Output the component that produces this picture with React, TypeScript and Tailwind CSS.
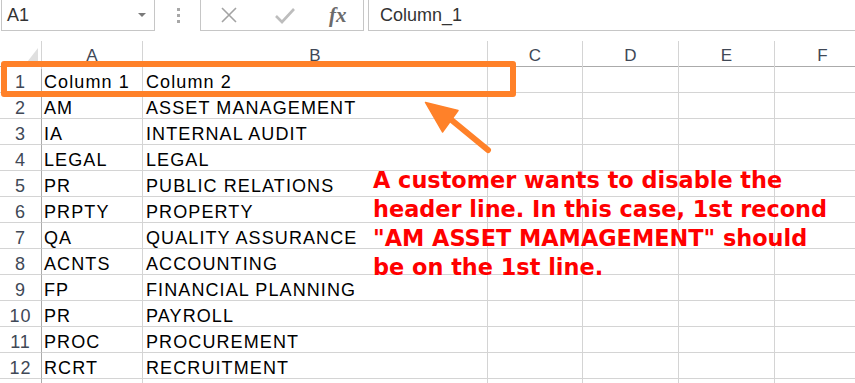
import type { ReactNode } from "react";

const rows: [string, string][] = [
  ["Column 1", "Column 2"],
  ["AM", "ASSET MANAGEMENT"],
  ["IA", "INTERNAL AUDIT"],
  ["LEGAL", "LEGAL"],
  ["PR", "PUBLIC RELATIONS"],
  ["PRPTY", "PROPERTY"],
  ["QA", "QUALITY ASSURANCE"],
  ["ACNTS", "ACCOUNTING"],
  ["FP", "FINANCIAL PLANNING"],
  ["PR", "PAYROLL"],
  ["PROC", "PROCUREMENT"],
  ["RCRT", "RECRUITMENT"],
  ["", ""],
];

const cols = "grid grid-cols-[42px_101px_345px_95px_96px_96px_96px]";

function Cell({ children, className = "" }: { children?: ReactNode; className?: string }) {
  return (
    <div className={`flex h-[26px] items-end border-r border-b border-[#d4d4d4] pl-[2px] text-[18px] leading-[20px] tracking-[1.1px] text-black whitespace-nowrap overflow-visible ${className}`}>
      {children}
    </div>
  );
}

export default function App() {
  return (
    <div className="relative h-[383px] w-[855px] overflow-hidden bg-white font-['Liberation_Sans',Arial,sans-serif]">
      {/* formula bar */}
      <div className="flex h-[31px] text-[#333]">
        <div className="ml-px flex w-[154px] items-center justify-between border-x border-b border-[#c6c6c6] pl-[5px] pr-[8px] text-[18px]">
          <span>A1</span>
          <span className="h-0 w-0 border-x-[4px] border-t-[4px] border-x-transparent border-t-[#7a7a7a]" />
        </div>
        <div className="flex w-[45px] flex-col items-center justify-center gap-[3px] pl-[2px]">
          <span className="h-[3px] w-[3px] bg-[#a8a8a8]" />
          <span className="h-[3px] w-[3px] bg-[#a8a8a8]" />
          <span className="h-[3px] w-[3px] bg-[#a8a8a8]" />
        </div>
        <div className="flex w-[164px] items-center border-x border-b border-[#c6c6c6]">
          <svg width="18" height="18" viewBox="0 0 18 18" className="ml-[19px]">
            <path d="M2 2 L16 16 M16 2 L2 16" stroke="#a3a3a3" strokeWidth="1.6" />
          </svg>
          <svg width="22" height="18" viewBox="0 0 22 18" className="ml-[36px]">
            <path d="M2 10 L8 16 L20 3" stroke="#bdbdbd" strokeWidth="2.6" fill="none" />
          </svg>
          <span className="ml-[33px] font-['Liberation_Serif',serif] text-[21px] font-bold italic leading-none text-[#6b6b6b]">fx</span>
        </div>
        <div className="ml-[4px] flex flex-1 items-center border-l border-b border-[#c6c6c6] pl-[11px] text-[18px]">
          Column_1
        </div>
      </div>

      {/* sheet */}
      <div className="mt-[10px]">
        <div className={`${cols} h-[26px] border-b border-[#ababab] text-[17px] text-[#404856]`}>
          <div className="relative border-r border-[#d4d4d4]">
            <svg width="14" height="18" viewBox="0 0 14 18" className="absolute right-[3px] bottom-[3px]">
              <path d="M14 0 L14 18 L0 18 Z" fill="#dfdfdf" />
            </svg>
          </div>
          {["A", "B", "C", "D", "E", "F"].map((c) => (
            <div key={c} className="flex items-center justify-center border-r border-[#d4d4d4] pt-[2px]">
              {c}
            </div>
          ))}
        </div>
        {rows.map(([a, b], i) => (
          <div key={i} className={cols}>
            <div className="flex h-[26px] items-end justify-center border-r border-b border-r-[#ababab] border-b-[#d4d4d4] text-[18px] leading-[20px] tracking-[1px] text-[#404856]">
              {i < 12 ? i + 1 : ""}
            </div>
            <Cell>{a}</Cell>
            <Cell className="pl-[3px]">{b}</Cell>
            <Cell />
            <Cell />
            <Cell />
            <Cell />
          </div>
        ))}
      </div>

      {/* annotations */}
      <div className="absolute left-[1px] top-[61px] h-[36px] w-[515px] rounded-[3px] border-[6px] border-[#ff8129]" />
      <svg width="855" height="383" className="pointer-events-none absolute left-0 top-0">
        <line x1="488" y1="150" x2="443" y2="113" stroke="#ff8129" strokeWidth="6" strokeLinecap="round" />
        <polygon points="425.5,102.5 458,110.5 442.5,132" fill="#ff8129" stroke="#ff8129" strokeWidth="1.5" strokeLinejoin="round" />
      </svg>
      <div className="absolute left-[373px] top-[166px] font-['DejaVu_Sans',sans-serif] text-[22.4px] font-bold leading-[29px] text-[#ff0000] whitespace-nowrap">
        <div>A customer wants to disable the</div>
        <div>header line. In this case, 1st recond</div>
        <div>"AM ASSET MAMAGEMENT" should</div>
        <div>be on the 1st line.</div>
      </div>
    </div>
  );
}
